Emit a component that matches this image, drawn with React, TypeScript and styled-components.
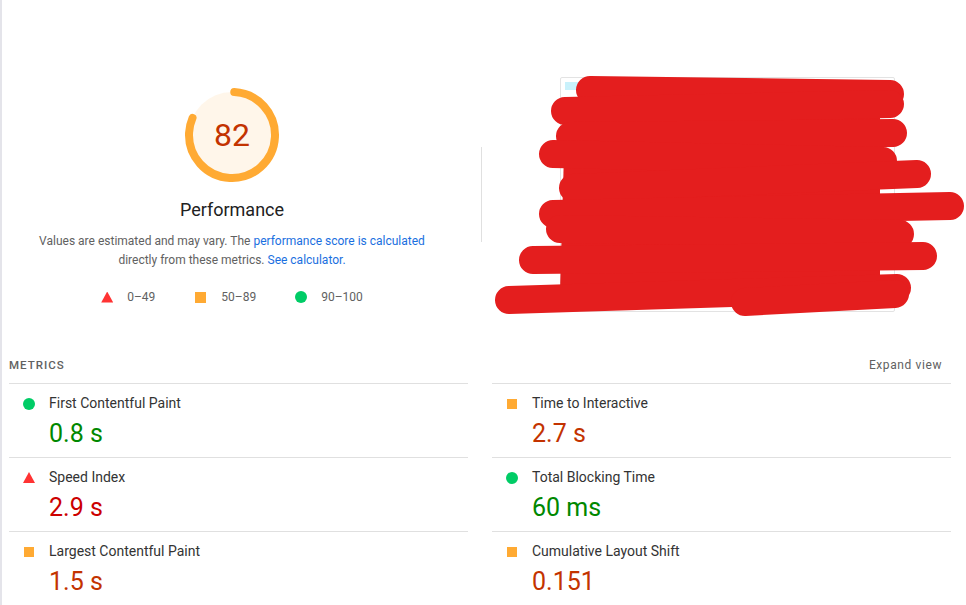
import React from "react"
import styled, { createGlobalStyle, css } from "styled-components"

type Rating = "pass" | "average" | "fail"

const GlobalStyle = createGlobalStyle`
  html, body {
    margin: 0;
    padding: 0;
    background: #fff;
  }
  body {
    font-family: Roboto, "Liberation Sans", Arial, sans-serif;
    color: #212121;
  }
`

const iconColor: Record<Rating, string> = {
  pass: "#0c6",
  average: "#fa3",
  fail: "#f33",
}

const valueColor: Record<Rating, string> = {
  pass: "#080",
  average: "#c33300",
  fail: "#c00",
}

const Page = styled.div`
  min-height: 605px;
  box-sizing: border-box;
  border-left: 2px solid #e4e4ea;
  padding: 0 15px 0 7px;
`

const Header = styled.div`
  display: grid;
  grid-template-columns: 446px 1px 1fr;
  column-gap: 26px;
  align-items: center;
  padding-top: 77px;
`

const ScoreColumn = styled.div`
  display: flex;
  flex-direction: column;
  align-items: center;
  padding-top: 5px;
`

const GaugeBox = styled.div`
  position: relative;
  width: 96px;
  height: 96px;
`

const GaugeScore = styled.div`
  position: absolute;
  inset: 0;
  display: flex;
  align-items: center;
  justify-content: center;
  font-size: 32px;
  color: #c33300;
`

const GaugeLabel = styled.div`
  margin-top: 15px;
  font-size: 18px;
  line-height: 24px;
  color: #212121;
`

const Description = styled.p`
  margin: 10px 0 0;
  font-size: 12px;
  line-height: 19px;
  color: #616161;
  text-align: center;
  a {
    color: #1a6fe0;
    text-decoration: none;
  }
`

const Legend = styled.div`
  display: flex;
  gap: 39px;
  margin-top: 17px;
  font-size: 12px;
  line-height: 20px;
  color: #616161;
`

const LegendItem = styled.span`
  display: flex;
  align-items: center;
  gap: 14px;
`

const Icon = styled.span<{ $kind: Rating; $size?: number }>`
  display: inline-block;
  flex: none;
  background: ${(p) => iconColor[p.$kind]};
  ${(p) => {
    const s = p.$size ?? 12
    if (p.$kind === "pass")
      return css`
        width: ${s}px;
        height: ${s}px;
        border-radius: 50%;
      `
    if (p.$kind === "average")
      return css`
        width: ${s - 2}px;
        height: ${s - 2}px;
        margin: 1px;
      `
    return css`
      width: ${s}px;
      height: ${s - 1}px;
      clip-path: polygon(50% 0, 100% 100%, 0 100%);
    `
  }}
`

const Divider = styled.div`
  width: 1px;
  height: 95px;
  background: #e0e0e0;
`

const ShotColumn = styled.div`
  display: flex;
  justify-content: center;
  padding-right: 4px;
`

const Thumbnail = styled.div`
  position: relative;
  width: 335px;
  height: 235px;
  box-sizing: border-box;
  border: 1px solid #e3e3e3;
  border-radius: 2px;
  padding: 4px;
`

const ThumbBar = styled.div`
  height: 8px;
  width: 60px;
  background: #c9f1fb;
`

const Scribble = styled.svg`
  position: absolute;
  left: -66px;
  top: -4px;
  width: 470px;
  height: 245px;
`

const MetricsHead = styled.div`
  display: flex;
  justify-content: space-between;
  align-items: center;
  margin-top: 45px;
  padding: 0 9px 10px 0;
  font-size: 12px;
  line-height: 16px;
  color: #616161;
`

const MetricsTitle = styled.span`
  font-weight: 500;
  letter-spacing: 1px;
  font-size: 11.5px;
`

const ExpandLink = styled.span`
  letter-spacing: 0.6px;
  font-size: 12px;
`

const MetricGrid = styled.div`
  display: grid;
  grid-template-columns: 1fr 1fr;
  column-gap: 24px;
`

const MetricRow = styled.div`
  border-top: 1px solid #e0e0e0;
  padding: 10px 0 9px 14px;
  display: grid;
  grid-template-columns: 12px 1fr;
  column-gap: 14px;
  row-gap: 6px;
  align-items: center;
`

const MetricLabel = styled.div`
  font-size: 14px;
  line-height: 19px;
  color: #333;
`

const MetricValue = styled.div<{ $kind: Rating }>`
  grid-column: 2;
  font-size: 25px;
  line-height: 29px;
  color: ${(p) => valueColor[p.$kind]};
`

const metrics: { label: string; value: string; kind: Rating }[] = [
  { label: "First Contentful Paint", value: "0.8 s", kind: "pass" },
  { label: "Time to Interactive", value: "2.7 s", kind: "average" },
  { label: "Speed Index", value: "2.9 s", kind: "fail" },
  { label: "Total Blocking Time", value: "60 ms", kind: "pass" },
  { label: "Largest Contentful Paint", value: "1.5 s", kind: "average" },
  { label: "Cumulative Layout Shift", value: "0.151", kind: "average" },
]

// hand-drawn redaction strokes over the page screenshot
const strokes: [number, number, number, number][] = [
  [95, 16, 395, 20],
  [70, 37, 395, 30],
  [75, 62, 398, 59],
  [58, 80, 388, 87],
  [78, 114, 422, 100],
  [58, 140, 455, 132],
  [65, 155, 405, 160],
  [38, 186, 428, 182],
  [14, 226, 402, 214],
  [250, 228, 400, 220],
]

function Gauge({ score }: { score: number }) {
  const r = 43
  const c = 2 * Math.PI * r
  return (
    <GaugeBox>
      <svg width="96" height="96" viewBox="0 0 96 96">
        <circle cx="48" cy="48" r={r} fill="rgba(255,170,51,0.1)" />
        <circle
          cx="48"
          cy="48"
          r={r}
          fill="none"
          stroke="#fa3"
          strokeWidth="8"
          strokeLinecap="round"
          strokeDasharray={`${(score / 100) * c - 4} ${c}`}
          transform="rotate(-87 48 48)"
        />
      </svg>
      <GaugeScore>{score}</GaugeScore>
    </GaugeBox>
  )
}

export default function App() {
  return (
    <>
      <GlobalStyle />
      <Page>
        <Header>
          <ScoreColumn>
            <Gauge score={82} />
            <GaugeLabel>Performance</GaugeLabel>
            <Description>
              Values are estimated and may vary. The{" "}
              <a href="#">performance score is calculated</a>
              <br />
              directly from these metrics. <a href="#">See calculator.</a>
            </Description>
            <Legend>
              <LegendItem>
                <Icon $kind="fail" />
                0–49
              </LegendItem>
              <LegendItem>
                <Icon $kind="average" $size={13} />
                50–89
              </LegendItem>
              <LegendItem>
                <Icon $kind="pass" />
                90–100
              </LegendItem>
            </Legend>
          </ScoreColumn>
          <Divider />
          <ShotColumn>
            <Thumbnail>
              <ThumbBar />
              <Scribble viewBox="0 0 470 245">
                <polygon
                  points="90,22 385,22 385,212 65,218 70,45"
                  fill="#e41e1e"
                />
                {strokes.map(([x1, y1, x2, y2], i) => (
                  <line
                    key={i}
                    x1={x1}
                    y1={y1}
                    x2={x2}
                    y2={y2}
                    stroke="#e41e1e"
                    strokeWidth="28"
                    strokeLinecap="round"
                  />
                ))}
              </Scribble>
            </Thumbnail>
          </ShotColumn>
        </Header>

        <MetricsHead>
          <MetricsTitle>METRICS</MetricsTitle>
          <ExpandLink>Expand view</ExpandLink>
        </MetricsHead>
        <MetricGrid>
          {metrics.map((m) => (
            <MetricRow key={m.label}>
              <Icon $kind={m.kind} />
              <MetricLabel>{m.label}</MetricLabel>
              <MetricValue $kind={m.kind}>{m.value}</MetricValue>
            </MetricRow>
          ))}
        </MetricGrid>
      </Page>
    </>
  )
}
